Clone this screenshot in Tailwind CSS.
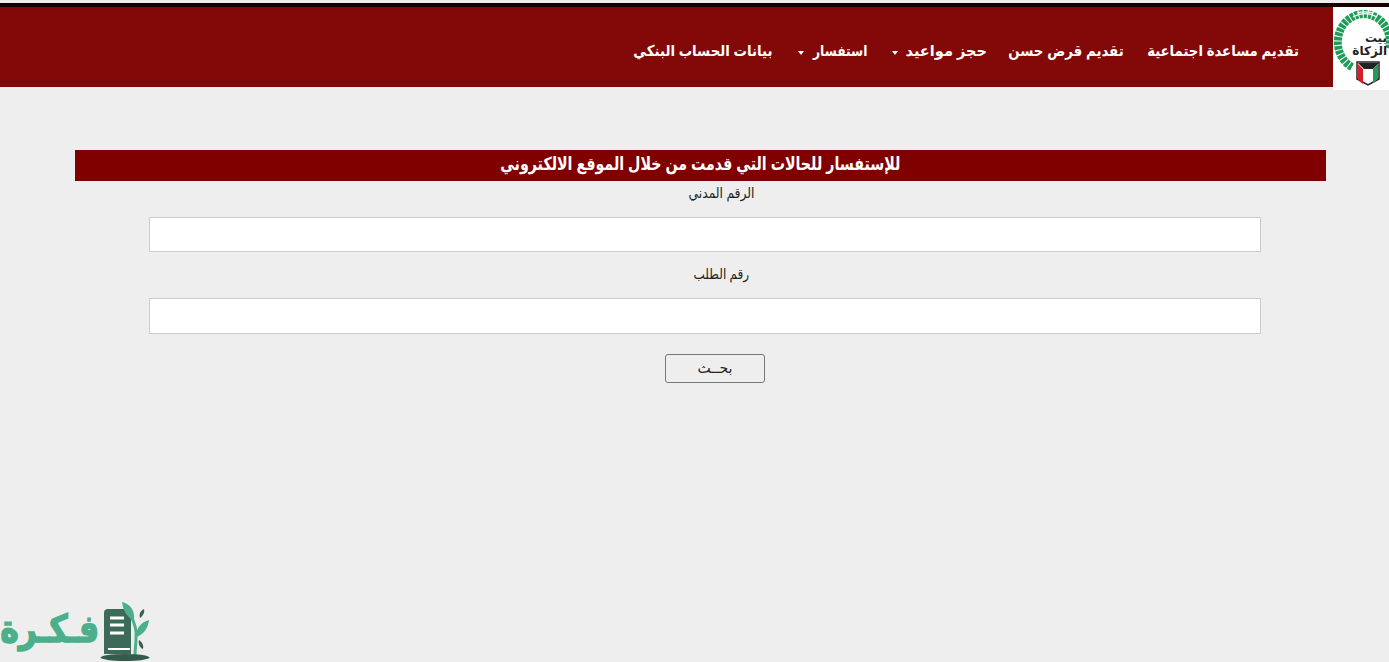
<!DOCTYPE html>
<html lang="ar" dir="rtl">
  <head>
    <meta charset="UTF-8" />
    <title>استفسار</title>
    <script src="https://cdn.jsdelivr.net/npm/@tailwindcss/browser@4"></script>
  </head>
  <body class="bg-[#eeeeee] h-[662px] overflow-hidden relative font-['Liberation_Sans','DejaVu_Sans',sans-serif] text-[14px] text-[#222]">
    <!-- top bar -->
    <div class="h-[3px] bg-[#eeeeee]"></div>
    <div class="h-[4px] bg-[#1a0000]"></div>

    <header class="flex items-start h-[80px] bg-[#830808] text-white">
      <div class="w-[56px] h-[83px] bg-white shrink-0 overflow-hidden">
        <svg width="56" height="83" viewBox="0 0 56 83">
          <!-- wreath -->
          <path d="M19 60A26 28 0 1 1 56 42" fill="none" stroke="#1f9d57" stroke-width="8" stroke-dasharray="3.500 1" />
          <path d="M20 10A25 25 0 0 1 44 10M24 6A28 28 0 0 1 40 6" fill="none" stroke="#fff" stroke-width="1.300" />
          <text x="54" y="35" text-anchor="start" font-family="DejaVu Sans" font-weight="700" font-size="12" fill="#222">بيت</text>
          <text x="54" y="48" text-anchor="start" font-family="DejaVu Sans" font-weight="700" font-size="12" fill="#222">الزكاة</text>
          <!-- shield -->
          <path d="M24 55h22v17l-11 6-11-6z" fill="#fff" stroke="#222" stroke-width="1.500" />
          <path d="M25 56h21l-6 6H31z" fill="#222" />
          <path d="M25 57l5 5v15l-5-4z" fill="#d3202a" />
          <path d="M40 62l5-5v15l-5 4z" fill="#1f9d57" />
        </svg>
      </div>
      <nav class="flex items-center pr-[34px] pt-[35px] text-[15px] font-bold leading-[18px] whitespace-nowrap">
        <span class="w-[151px]"><span class="inline-block origin-right scale-x-[.883]">تقديم مساعدة اجتماعية</span></span>
        <span class="w-[114px] mr-[24px]"><span class="inline-block origin-right scale-x-[.89]">تقديم قرض حسن</span></span>
        <span class="w-[80px] mr-[23px]"><span class="inline-block origin-right scale-x-[.97]">حجز مواعيد</span></span>
        <i class="w-0 h-0 mr-[9px] mt-[4px] border-x-[3px] border-x-transparent border-t-[4px] border-t-white"></i>
        <span class="w-[54px] mr-[25px]"><span class="inline-block origin-right scale-x-[.82]">استفسار</span></span>
        <i class="w-0 h-0 mr-[9px] mt-[4px] border-x-[3px] border-x-transparent border-t-[4px] border-t-white"></i>
        <span class="w-[139px] mr-[25px]"><span class="inline-block origin-right scale-x-[.89]">بيانات الحساب البنكي</span></span>
      </nav>
    </header>

    <main class="pt-[63px] pr-[63px] pl-[75px]">
      <h1 class="h-[31px] bg-[#800000] text-white text-center text-[18px] font-bold leading-[28px]"><span class="inline-block scale-x-[.79]">للإستفسار للحالات التي قدمت من خلال الموقع الالكتروني</span></h1>

      <form class="flex flex-col items-center">
        <label class="h-[20px] leading-[24px] mb-[16px] ml-[41px]"><span class="inline-block scale-x-[.88]">الرقم المدني</span></label>
        <input type="text" class="w-[1112px] h-[35px] ml-[9px] bg-white border border-[#cccccc] mb-[13px]" />
        <label class="h-[20px] leading-[18px] mb-[13px] ml-[41px]"><span class="inline-block scale-x-[.86]">رقم الطلب</span></label>
        <input type="text" class="w-[1112px] h-[36px] ml-[9px] bg-white border border-[#cccccc] mb-[20px]" />
        <button type="button" class="w-[100px] h-[29px] ml-[29px] border border-[#767676] rounded-[3px] text-[14px] text-[#222]">بحــث</button>
      </form>
    </main>

    <!-- watermark -->
    <div class="absolute left-0 bottom-0 w-[152px] h-[62px]" dir="ltr">
      <span class="absolute right-[53px] top-[3px] origin-right text-[38px] leading-[52px] font-bold text-[#4caf8c] [-webkit-text-stroke:1.5px_#4caf8c] font-['DejaVu_Sans',sans-serif] whitespace-nowrap scale-x-[.83]" dir="rtl">فـكـرة</span>
      <svg class="absolute left-[98px] top-0" width="54" height="62" viewBox="0 0 54 62">
        <path d="M6 13a4 4 0 0 1 4-4h17l6 9v36H6z" fill="#3b6b58" />
        <path d="M12 18h14M12 25h14M12 33h14" stroke="#fff" stroke-width="3" />
        <path d="M10 49h22" stroke="#fff" stroke-width="2" />
        <path d="M33 16c4 8 6 14 5 22 0 6-1 12-1 17" fill="none" stroke="#4caf8c" stroke-width="3" />
        <path d="M24 2c9 2 13 9 12 18C29 18 25 10 24 2z" fill="#4caf8c" />
        <path d="M51 20c-1 9-6 15-13 17 0-9 5-15 13-17z" fill="#4caf8c" />
        <path d="M46 9c1 3-1 7-4 9-1-4 0-7 4-9zM41 40c3 2 5 5 4 9-3-1-5-5-4-9z" fill="#3b5f52" />
        <ellipse cx="27" cy="57.500" rx="24.500" ry="3.500" fill="#335c4c" />
      </svg>
    </div>
  </body>
</html>
